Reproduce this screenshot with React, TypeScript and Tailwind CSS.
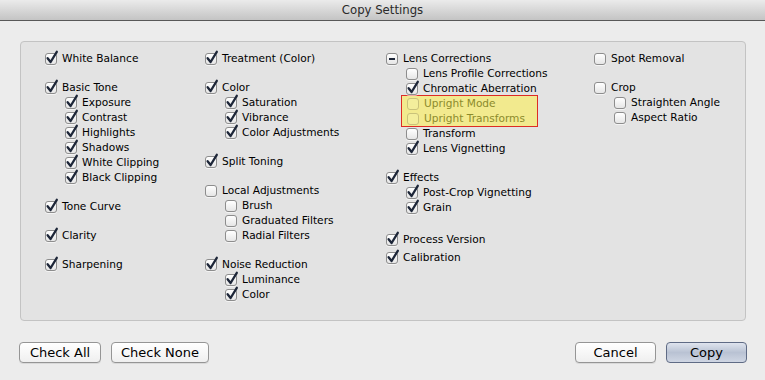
import React from 'react'

type Item = { label: string; state?: 'on' | 'off' | 'mixed'; indent?: boolean; mt?: string; hl?: boolean }

const font = { fontFamily: '"DejaVu Sans", "Lucida Grande", sans-serif' }

function Box({ state = 'on', hl }: { state?: 'on' | 'off' | 'mixed'; hl?: boolean }) {
  return (
    <span
      className={
        'relative w-[12px] h-[12px] shrink-0 rounded-[3px] border ' +
        (hl
          ? 'border-[#c9c27a] bg-[#f3ee9c]'
          : 'border-[#8d8d8d] bg-gradient-to-b from-white to-[#e6e6e6] shadow-[0_1px_0_rgba(255,255,255,0.6)]')
      }
    >
      {state === 'on' && (
        <svg viewBox="0 0 14 14" className="absolute -left-[1px] -top-[3px] w-[14px] h-[14px] overflow-visible">
          <path d="M2.6 7.2 L5.6 11 L11.8 0.8" fill="none" stroke="#1d2638" strokeWidth="2.3" strokeLinecap="round" strokeLinejoin="round" />
        </svg>
      )}
      {state === 'mixed' && <span className="absolute left-[2px] right-[2px] top-[4px] h-[2px] bg-[#1d2638]" />}
    </span>
  )
}

function Row({ item }: { item: Item }) {
  return (
    <div className={'flex items-center h-[15px] gap-[5px] ' + (item.indent ? 'pl-[20px] ' : '') + (item.mt ?? '')}>
      <Box state={item.state} hl={item.hl} />
      <span className={'text-[10.6px] leading-none whitespace-nowrap ' + (item.hl ? 'text-[#8c8a2c]' : 'text-black')}>{item.label}</span>
    </div>
  )
}

const cols: { w: string; items: Item[] }[] = [
  {
    w: 'w-[160px]',
    items: [
      { label: 'White Balance' },
      { label: 'Basic Tone', mt: 'mt-[14px]' },
      { label: 'Exposure', indent: true },
      { label: 'Contrast', indent: true },
      { label: 'Highlights', indent: true },
      { label: 'Shadows', indent: true },
      { label: 'White Clipping', indent: true },
      { label: 'Black Clipping', indent: true },
      { label: 'Tone Curve', mt: 'mt-[14px]' },
      { label: 'Clarity', mt: 'mt-[14px]' },
      { label: 'Sharpening', mt: 'mt-[14px]' },
    ],
  },
  {
    w: 'w-[181px]',
    items: [
      { label: 'Treatment (Color)' },
      { label: 'Color', mt: 'mt-[14px]' },
      { label: 'Saturation', indent: true },
      { label: 'Vibrance', indent: true },
      { label: 'Color Adjustments', indent: true },
      { label: 'Split Toning', mt: 'mt-[14px]' },
      { label: 'Local Adjustments', state: 'off', mt: 'mt-[14px]' },
      { label: 'Brush', state: 'off', indent: true },
      { label: 'Graduated Filters', state: 'off', indent: true },
      { label: 'Radial Filters', state: 'off', indent: true },
      { label: 'Noise Reduction', mt: 'mt-[14px]' },
      { label: 'Luminance', indent: true },
      { label: 'Color', indent: true },
    ],
  },
  {
    w: 'w-[208px]',
    items: [
      { label: 'Lens Corrections', state: 'mixed' },
      { label: 'Lens Profile Corrections', state: 'off', indent: true },
      { label: 'Chromatic Aberration', indent: true },
    ],
  },
  {
    w: 'w-[150px]',
    items: [
      { label: 'Spot Removal', state: 'off' },
      { label: 'Crop', state: 'off', mt: 'mt-[14px]' },
      { label: 'Straighten Angle', state: 'off', indent: true },
      { label: 'Aspect Ratio', state: 'off', indent: true },
    ],
  },
]

const lensRest: Item[] = [
  { label: 'Transform', state: 'off', indent: true },
  { label: 'Lens Vignetting', indent: true },
  { label: 'Effects', mt: 'mt-[14px]' },
  { label: 'Post-Crop Vignetting', indent: true },
  { label: 'Grain', indent: true },
  { label: 'Process Version', mt: 'mt-[17px]' },
  { label: 'Calibration', mt: 'mt-[3px]' },
]

function Button({ children, w, primary }: { children: React.ReactNode; w: string; primary?: boolean }) {
  return (
    <button
      className={
        w +
        ' h-[21px] rounded-[4px] border text-[13px] leading-none text-black flex items-center justify-center ' +
        (primary
          ? 'border-[#5f6b85] bg-gradient-to-b from-[#dfe4ee] via-[#b9c2d3] to-[#cfd6e3]'
          : 'border-[#959595] bg-gradient-to-b from-white to-[#efefef] shadow-[0_1px_0_rgba(0,0,0,0.08)]')
      }
    >
      {children}
    </button>
  )
}

export default function App() {
  return (
    <div className="w-[765px] h-[380px] bg-[#ececec] flex flex-col overflow-hidden" style={font}>
      <div className="h-[21px] shrink-0 bg-gradient-to-b from-[#ebebeb] to-[#c4c4c4] border-b border-[#585858] flex items-center justify-center">
        <span className="text-[13px] text-[#2a2a2a]" style={{ fontFamily: '"DejaVu Sans Condensed", "Liberation Sans Narrow", sans-serif' }}>
          Copy Settings
        </span>
      </div>

      <div className="mx-[20px] mt-[20px] w-[726px] h-[280px] rounded-[4px] border border-[#c3c3c3] bg-[#e3e3e3] pt-[9px] pl-[24px] flex">
        {cols.map((c, i) => (
          <div key={i} className={c.w + ' flex flex-col'}>
            {c.items.map((it, j) => (
              <Row key={j} item={it} />
            ))}
            {i === 2 && (
              <>
                <div className="ml-[15px] w-[137px] -my-[1px] border border-solid border-[#dd2c25] bg-[#f2ea8e]">
                  <div className="-ml-[15px]">
                    <Row item={{ label: 'Upright Mode', state: 'off', indent: true, hl: true }} />
                    <Row item={{ label: 'Upright Transforms', state: 'off', indent: true, hl: true }} />
                  </div>
                </div>
                {lensRest.map((it, j) => (
                  <Row key={j} item={it} />
                ))}
              </>
            )}
          </div>
        ))}
      </div>

      <div className="flex items-center mt-[21px] pl-[19px] pr-[18px]">
        <Button w="w-[82px]">Check All</Button>
        <div className="w-[10px]" />
        <Button w="w-[98px]">Check None</Button>
        <div className="flex-1" />
        <Button w="w-[81px]">Cancel</Button>
        <div className="w-[10px]" />
        <Button w="w-[81px]" primary>
          Copy
        </Button>
      </div>
    </div>
  )
}
